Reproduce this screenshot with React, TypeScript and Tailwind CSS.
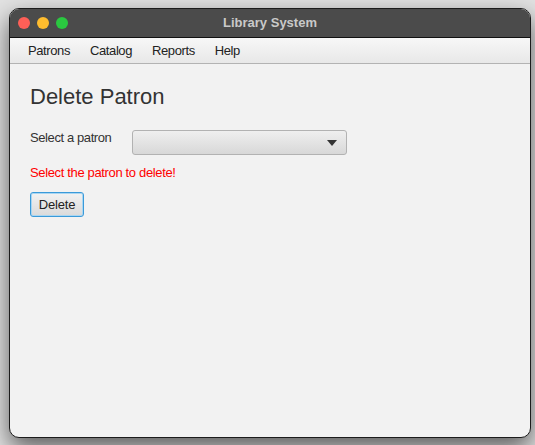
import React from "react";

export default function App() {
  const font = { fontFamily: '"Liberation Sans", Arial, sans-serif' };
  return (
    <div
      className="w-[535px] h-[445px] overflow-hidden bg-[#e2e2e2] pt-[8px] pl-[9px]"
      style={font}
    >
      <div className="w-[522px] h-[430px] rounded-[10px] border border-[#1c1c1c] bg-[#f2f2f2] overflow-hidden flex flex-col shadow-[0_10px_24px_rgba(0,0,0,0.6)]">
        {/* title bar */}
        <div className="relative h-[29px] shrink-0 bg-[#4b4b4b] border-b border-[#111] flex items-center">
          <div className="flex items-center gap-[7px] pl-[8px]">
            <span className="w-[12px] h-[12px] rounded-full bg-[#fe5f57]" />
            <span className="w-[12px] h-[12px] rounded-full bg-[#febc2e]" />
            <span className="w-[12px] h-[12px] rounded-full bg-[#2ac840]" />
          </div>
          <div className="absolute inset-0 flex items-center justify-center text-[13px] font-bold text-[#c9c9c9]">
            Library System
          </div>
        </div>
        {/* menu bar */}
        <div className="h-[26px] shrink-0 flex items-center pl-[8px] bg-gradient-to-b from-[#f7f7f7] to-[#e8e8e8] border-b border-[#b3b3b3] text-[13px] tracking-[-0.4px] text-[#222]">
          <span className="px-[10px]">Patrons</span>
          <span className="px-[10px]">Catalog</span>
          <span className="px-[10px]">Reports</span>
          <span className="px-[10px]">Help</span>
        </div>
        {/* content */}
        <div className="flex-1 flex flex-col items-start pl-[20px] pt-[20px]">
          <div className="text-[22px] leading-[26px] text-[#333]">Delete Patron</div>
          <div className="mt-[20px] flex items-start">
            <div className="w-[102px] text-[13px] leading-[16px] tracking-[-0.4px] text-[#333]">Select a patron</div>
            <div className="w-[215px] h-[25px] rounded-[3px] border border-[#b2b2b2] bg-gradient-to-b from-[#efefef] to-[#d8d8d8] flex items-center justify-end pr-[9px]">
              <svg width="10" height="6" viewBox="0 0 10 6">
                <path d="M0 0 H10 L5 6 Z" fill="#333" />
              </svg>
            </div>
          </div>
          <div className="mt-[10px] text-[13px] leading-[16px] tracking-[-0.35px] text-[#ff0000]">
            Select the patron to delete!
          </div>
          <button className="mt-[11px] w-[54px] h-[25px] rounded-[3px] border border-[#3a9ad9] shadow-[inset_0_0_0_1px_#a9d6f2] bg-gradient-to-b from-[#f2f2f2] to-[#dadada] text-[13px] tracking-[-0.2px] text-[#222] flex items-center justify-center">
            Delete
          </button>
        </div>
      </div>
    </div>
  );
}
